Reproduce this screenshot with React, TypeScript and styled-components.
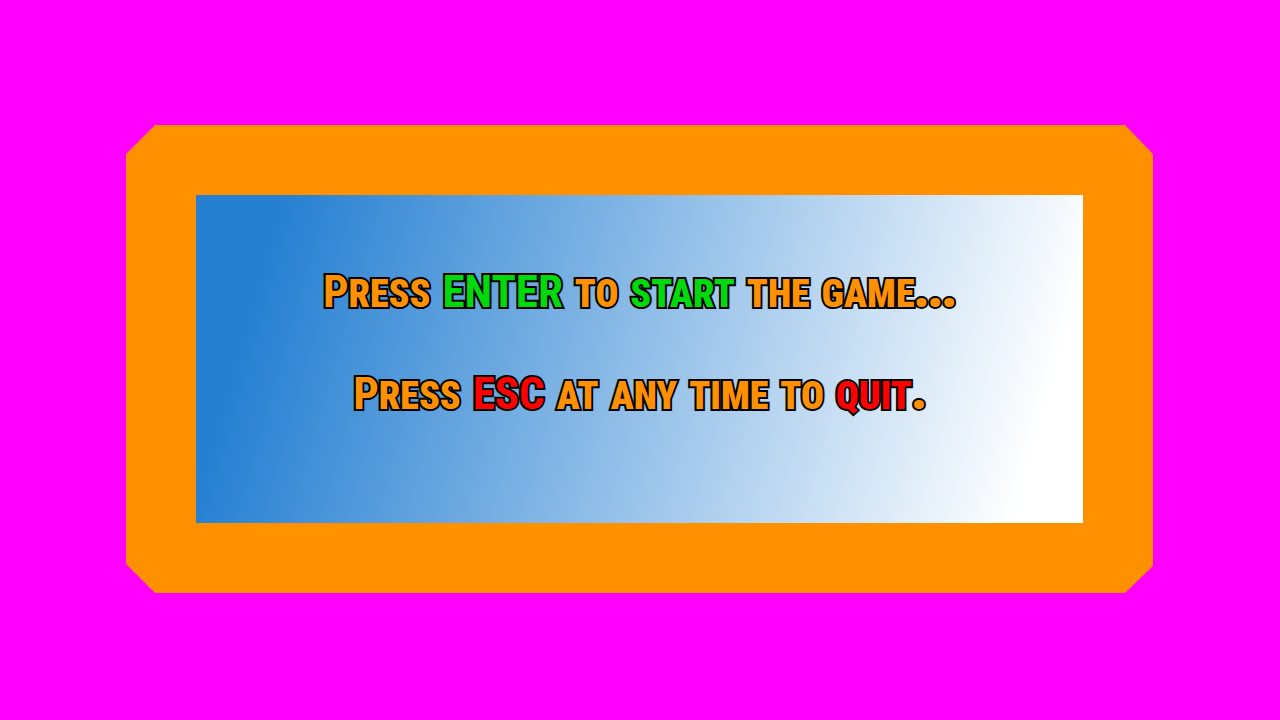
import React from "react";
import styled, { createGlobalStyle } from "styled-components";

const GlobalStyle = createGlobalStyle`
  * { box-sizing: border-box; }
  body { margin: 0; background: #ff00ff; }
`;

const Screen = styled.main`
  display: grid;
  align-items: center;
  min-height: 100vh;
  padding: 0 127px 2px 126px;
`;

const Frame = styled.section`
  padding: 70px;
  background: #ff9100;
  clip-path: polygon(
    29px 0, calc(100% - 28px) 0, 100% 29px, 100% calc(100% - 27px),
    calc(100% - 28px) 100%, 29px 100%, 0 calc(100% - 29px), 0 29px
  );
`;

const Panel = styled.div`
  display: flex;
  flex-direction: column;
  gap: 56px;
  padding: 76px 16px 104px;
  background: linear-gradient(106deg, #2680d2 9%, #ffffff 93%);
`;

const Line = styled.p`
  display: flex;
  flex-wrap: wrap;
  justify-content: center;
  align-items: baseline;
  column-gap: 12px;
  margin: 0;
  font-family: "Roboto Condensed", Roboto, "Liberation Sans", sans-serif;
  font-size: 38px;
  font-weight: 900;
  line-height: 46px;
  color: #ff9100;
  text-transform: uppercase;
  -webkit-text-stroke: 4px #000;
  paint-order: stroke fill;
`;

const Word = styled.span<{ $color?: string }>`
  color: ${({ $color }) => $color ?? "inherit"};
`;

const Tall = styled.span`
  font-size: 45px;
  font-weight: 700;
  line-height: 36px;
`;

const Dots = styled.span`
  font-family: "Open Sans", sans-serif;
  font-size: 48px;
  font-weight: 800;
  line-height: 28px;
`;

const green = "#00d90b";
const red = "#ff0000";

export default function App() {
  return (
    <>
      <GlobalStyle />
      <Screen>
        <Frame>
          <Panel>
            <Line>
              <Word><Tall>P</Tall>ress</Word>
              <Word $color={green}><Tall>ENTER</Tall></Word>
              <Word>to</Word>
              <Word $color={green}>start</Word>
              <Word>the</Word>
              <Word>game<Dots>...</Dots></Word>
            </Line>
            <Line>
              <Word><Tall>P</Tall>ress</Word>
              <Word $color={red}><Tall>ESC</Tall></Word>
              <Word>at</Word>
              <Word>any</Word>
              <Word>time</Word>
              <Word>to</Word>
              <Word><Word $color={red}>quit</Word><Dots>.</Dots></Word>
            </Line>
          </Panel>
        </Frame>
      </Screen>
    </>
  );
}
